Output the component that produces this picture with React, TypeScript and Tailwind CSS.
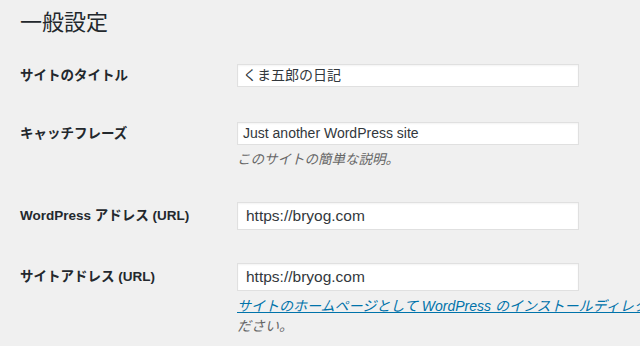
import React from "react";

const font = { fontFamily: '"Liberation Sans", "Noto Sans CJK JP", sans-serif' };

export default function App() {
  return (
    <div style={font} className="w-[640px] h-[346px] overflow-hidden bg-[#f0f0f0] pl-5 text-[#23282d]">
      <h1 className="text-[22px] leading-[29px] font-normal mt-[8px] text-[#23282d]">一般設定</h1>

      <div className="flex mt-[27px]">
        <div className="w-[217px] shrink-0 text-[13.5px] font-bold leading-[23px]">サイトのタイトル</div>
        <div className="w-[342px] h-[23px] bg-white border border-[#e0e0e0] shadow-[inset_0_1px_2px_rgba(0,0,0,0.05)] px-[5px] text-[14px] leading-[21px] text-[#32373c]">
          くま五郎の日記
        </div>
      </div>

      <div className="flex mt-[35px]">
        <div className="w-[217px] shrink-0 text-[13.5px] font-bold leading-[23px]">キャッチフレーズ</div>
        <div className="flex flex-col">
          <div className="w-[342px] h-[23px] bg-white border border-[#e0e0e0] shadow-[inset_0_1px_2px_rgba(0,0,0,0.05)] px-[5px] text-[14px] leading-[21px] text-[#32373c]">
            Just another WordPress site
          </div>
          <div className="mt-[5px] text-[13.5px] leading-[20px] italic text-[#666]">このサイトの簡単な説明。</div>
        </div>
      </div>

      <div className="flex mt-[32px]">
        <div className="w-[217px] shrink-0 text-[13.5px] font-bold leading-[28px]">WordPress アドレス (URL)</div>
        <div className="w-[342px] h-[28px] bg-white border border-[#e0e0e0] shadow-[inset_0_1px_2px_rgba(0,0,0,0.05)] px-[8px] text-[15.5px] leading-[26px] text-[#32373c]">
          https://bryog.com
        </div>
      </div>

      <div className="flex mt-[33px]">
        <div className="w-[217px] shrink-0 text-[13.5px] font-bold leading-[28px]">サイトアドレス (URL)</div>
        <div className="flex flex-col">
          <div className="w-[342px] h-[28px] bg-white border border-[#e0e0e0] shadow-[inset_0_1px_2px_rgba(0,0,0,0.05)] px-[8px] text-[15.5px] leading-[26px] text-[#32373c]">
            https://bryog.com
          </div>
          <div className="mt-[5px] text-[14px] leading-[20px] italic text-[#666] w-[420px]">
            <div className="whitespace-nowrap">
              <a href="#" className="text-[#0073aa] underline">
                サイトのホームページとして WordPress のインストールディレクトリとは異なる場所を設定する場合は、ここにアドレスを入力してく
              </a>
            </div>
            <div>ださい。</div>
          </div>
        </div>
      </div>
    </div>
  );
}
